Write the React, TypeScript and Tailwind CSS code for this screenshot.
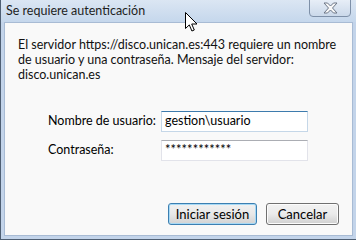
export default function App() {
  const font = { fontFamily: "Lato, 'Noto Sans', sans-serif" };
  return (
    <div
      className="relative w-[356px] h-[240px] flex flex-col bg-[#c3d4ea] border-l border-b border-[#4f5f73] text-[12.5px] text-black"
      style={font}
    >
      {/* Title bar */}
      <div className="h-[22px] flex items-start justify-between bg-gradient-to-b from-[#dbe6f3] to-[#c5d7ec] pl-[5px] pr-[5px]">
        <span className="mt-[3px] leading-[16px] text-[#1e1e1e] whitespace-nowrap">Se requiere autenticación</span>
        <div className="w-[42px] h-[18px] mt-[-1px] rounded-b-[4px] border border-[#7e90a8] bg-gradient-to-b from-[#e7eef7] to-[#cbd9ea] flex items-center justify-center">
          <svg width="15" height="12" viewBox="0 0 15 12">
            <path
              d="M1 1h3.5l3 3 3-3H14l-4.5 5L14 11h-3.5l-3-3-3 3H1l4.5-5z"
              fill="#f8f8f8"
              stroke="#6c7686"
              strokeWidth="1"
              strokeLinejoin="round"
            />
          </svg>
        </div>
      </div>

      {/* Content */}
      <div className="flex-1 mx-[3px] mb-[3px] border border-[#a8bbd4] bg-[#f9f9f9] flex flex-col pl-[13px] pr-[13px] pt-[14px] pb-[10px]">
        <p className="leading-[15px] text-[#111] whitespace-nowrap">
          El servidor https://disco.unican.es:443 requiere un nombre
          <br />
          de usuario y una contraseña. Mensaje del servidor:
          <br />
          disco.unican.es
        </p>

        <div className="mt-[29px] flex flex-col gap-[8px] pl-[30px]">
          <div className="flex items-center">
            <span className="w-[113px] whitespace-nowrap">Nombre de usuario:</span>
            <div className="w-[147px] h-[21px] border border-[#c5d7e8] border-t-[#3d7bad] bg-white flex items-center pl-[3px]">
              gestion\usuario
            </div>
          </div>
          <div className="flex items-center">
            <span className="w-[113px] whitespace-nowrap">Contraseña:</span>
            <div className="w-[147px] h-[21px] border border-[#e2e3ea] border-t-[#abadb3] bg-white flex items-start pl-[3px] pt-[1px] text-[13px] leading-[14px]">
              ************
            </div>
          </div>
        </div>

        <div className="mt-auto flex justify-end gap-[9px]">
          <button className="w-[89px] h-[22px] rounded-[3px] border border-[#3c7fb1] bg-gradient-to-b from-[#f1f1f1] via-[#e8e8e8] to-[#d2d2d2] shadow-[inset_0_0_0_1px_#a7d9f5] leading-[18px] text-[13px]">
            Iniciar sesión
          </button>
          <button className="w-[73px] h-[22px] rounded-[3px] border border-[#707070] bg-gradient-to-b from-[#f2f2f2] via-[#ebebeb] to-[#d0d0d0] shadow-[inset_0_0_0_1px_#fcfcfc] leading-[18px] text-[13px]">
            Cancelar
          </button>
        </div>
      </div>

      {/* Mouse pointer */}
      <svg className="absolute left-[184px] top-[12px]" width="13" height="21" viewBox="0 0 13 21">
        <path
          d="M0.5 0.5v16l3.8-3.6 2.6 6.1 2.4-1-2.6-6h5.3z"
          fill="#fff"
          stroke="#000"
          strokeWidth="1"
          strokeLinejoin="miter"
        />
      </svg>
    </div>
  );
}
